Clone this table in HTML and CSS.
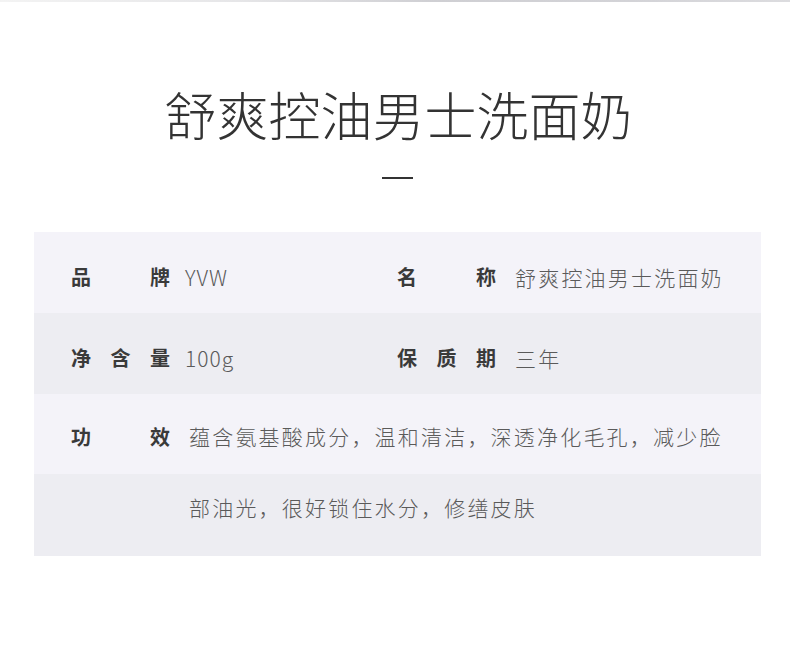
FILE: index.html
```html
<!DOCTYPE html>
<html lang="zh-CN">
<head>
  <meta charset="UTF-8" />
  <meta name="viewport" content="width=device-width, initial-scale=1.0"/>
  <title>舒爽控油男士洗面奶</title>

  <link rel="stylesheet" href="styles.css">
</head>

<body>
  <div class="top-bar"></div>

  <div class="container">
    <h1 class="title">舒爽控油男士洗面奶</h1>
    <div class="dash"></div>

    <div class="spec-table">
      <div class="spec-row light">
        <div class="spec-item">
          <span class="spec-label">品牌</span>
          <span class="spec-value latin">YVW</span>
        </div>
        <div class="spec-item">
          <span class="spec-label">名称</span>
          <span class="spec-value">舒爽控油男士洗面奶</span>
        </div>
      </div>

      <div class="spec-row dark">
        <div class="spec-item">
          <span class="spec-label">净含量</span>
          <span class="spec-value latin">100g</span>
        </div>
        <div class="spec-item">
          <span class="spec-label">保质期</span>
          <span class="spec-value">三年</span>
        </div>
      </div>

      <div class="spec-row effect">
        <div class="spec-item">
          <span class="spec-label">功效</span>
          <span class="spec-value">蕴含氨基酸成分，温和清洁，深透净化毛孔，减少脸<br>部油光，很好锁住水分，修缮皮肤</span>
        </div>
      </div>
    </div>
  </div>
</body>
</html>
```

FILE: styles.css
```css
body {
  margin: 0;
  padding: 0;
  background: #fff;
  color: #333;
  font-family: "Noto Sans CJK SC", "Noto Sans", sans-serif;
}

.top-bar {
  height: 2px;
  background: linear-gradient(to right, #f3f3f3 0%, #e6e6e8 30%, #cfcfd3 55%, #d3d3d7 80%, #dcdcdf 100%);
}

.container {
  padding: 0 29px 0 34px;
}

.title {
  margin: 82px 0 0;
  font-size: 52px;
  line-height: 60px;
  font-weight: 300;
  text-align: center;
  color: #333;
  padding-left: 2px;
}

.dash {
  width: 31px;
  height: 2px;
  background: #333;
  margin: 33px auto 0;
}

.spec-table {
  margin-top: 53px;
}

.spec-row {
  display: grid;
  grid-template-columns: 326px 1fr;
  padding: 8px 0 0 37px;
  height: 73px;
  align-items: center;
}

.spec-row.light {
  background: #f4f3f9;
}

.spec-row.dark {
  background: #ededf2;
}

.spec-row.effect {
  display: block;
  height: 162px;
  padding: 7px 0 0 37px;
  box-sizing: border-box;
  background: linear-gradient(to bottom, #f4f3f9 0, #f4f3f9 80px, #ededf2 80px, #ededf2 100%);
}

.spec-item {
  display: flex;
  align-items: flex-start;
}

.spec-label {
  width: 99px;
  flex-shrink: 0;
  font-size: 20px;
  line-height: 30px;
  font-weight: bold;
  color: #3a3a3a;
  text-align: justify;
  text-align-last: justify;
}

.spec-value {
  margin-left: 19px;
  font-size: 21px;
  line-height: 30px;
  letter-spacing: 2.2px;
  font-weight: 300;
  color: #5a5a5a;
  white-space: nowrap;
}

.spec-value.latin {
  margin-left: 15px;
  letter-spacing: 1px;
}

.effect .spec-label,
.effect .spec-value {
  line-height: 71px;
}
```
